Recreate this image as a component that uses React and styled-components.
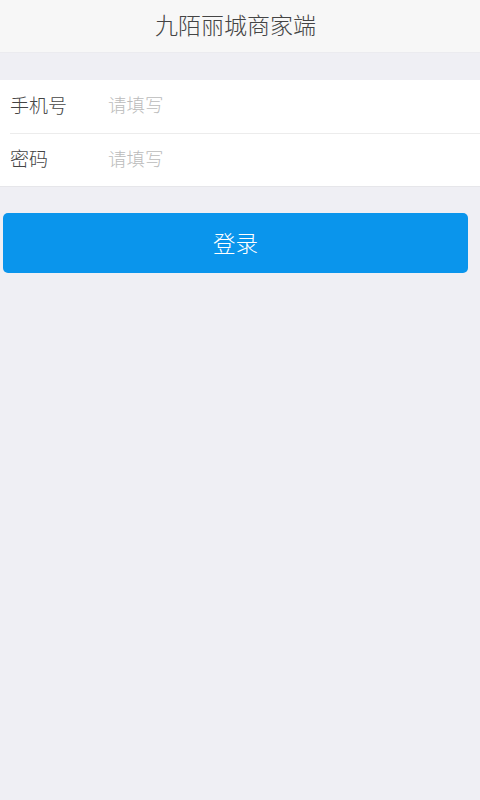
import React from 'react';
import styled, { createGlobalStyle } from 'styled-components';

const GlobalStyle = createGlobalStyle`
  html, body {
    margin: 0;
    padding: 0;
    background: #efeff4;
    font-family: "Noto Sans CJK SC", "Noto Sans", sans-serif;
  }
`;

const Page = styled.div`
  min-height: 800px;
  background: #efeff4;
`;

const Header = styled.header`
  height: 53px;
  box-sizing: border-box;
  padding: 0 9px 5px 0;
  background: #f7f7f7;
  border-bottom: 1px solid #ebebef;
  display: flex;
  align-items: center;
  justify-content: center;
  font-size: 23px;
  font-weight: 300;
  color: #444;
`;

const Form = styled.div`
  margin-top: 27px;
  background: #fff;
  border-bottom: 1px solid #e6e6ea;
`;

const Row = styled.label`
  display: flex;
  align-items: center;
  height: 53px;
  box-sizing: border-box;
  padding-bottom: 5px;
  margin-left: 10px;
  border-top: ${({ first }) => (first ? 'none' : '1px solid #ececec')};
`;

const Label = styled.span`
  width: 98px;
  font-size: 19px;
  font-weight: 300;
  color: #444;
`;

const Input = styled.input`
  flex: 1;
  border: none;
  outline: none;
  background: transparent;
  font-family: inherit;
  font-size: 18.5px;
  font-weight: 300;
  color: #444;
  padding: 0;
  &::placeholder {
    color: #bbb;
  }
`;

const LoginButton = styled.button`
  display: block;
  margin: 26px 12px 0 3px;
  width: 465px;
  height: 60px;
  padding: 0 0 3px;
  border: none;
  border-radius: 5px;
  background: #0a95ec;
  color: #fff;
  font-family: inherit;
  font-size: 22.5px;
  font-weight: 300;
  cursor: pointer;
`;

export default function App() {
  return (
    <Page>
      <GlobalStyle />
      <Header>九陌丽城商家端</Header>
      <Form>
        <Row first>
          <Label>手机号</Label>
          <Input placeholder="请填写" />
        </Row>
        <Row>
          <Label>密码</Label>
          <Input type="password" placeholder="请填写" />
        </Row>
      </Form>
      <LoginButton>登录</LoginButton>
    </Page>
  );
}
